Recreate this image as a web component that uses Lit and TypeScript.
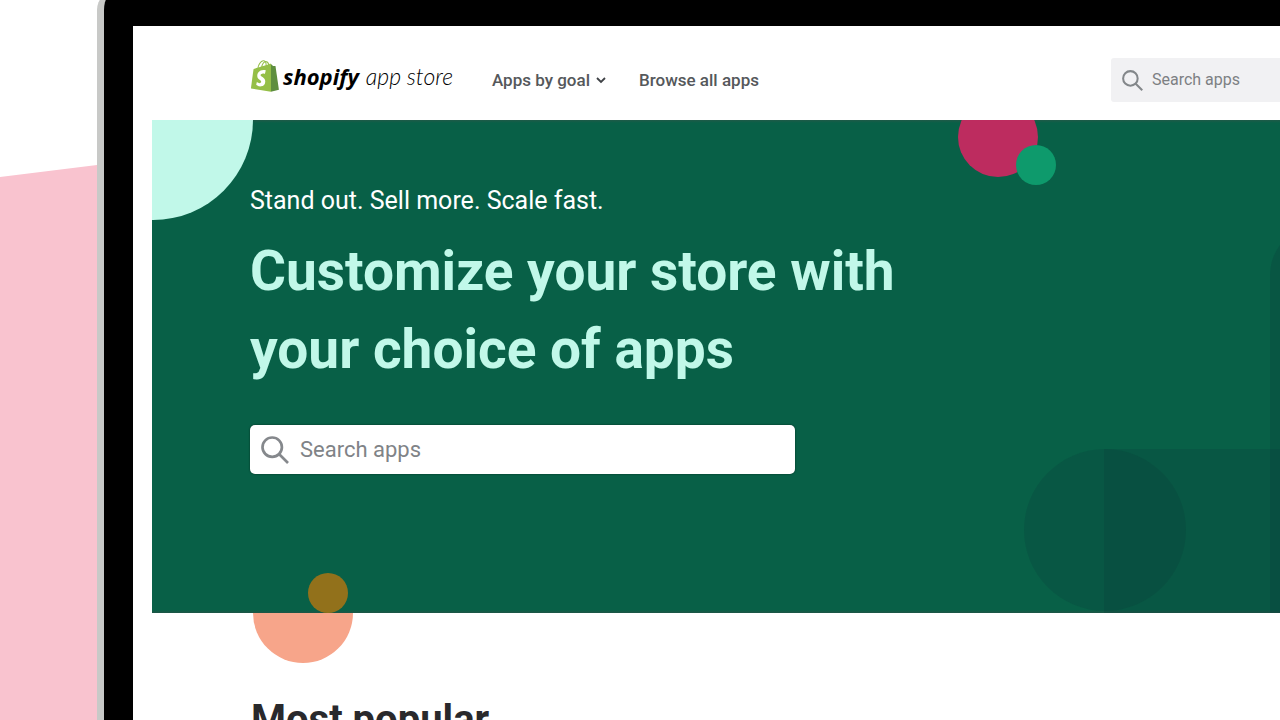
import { LitElement, html, css } from "lit";
import { customElement } from "lit/decorators.js";

const searchIcon = html`<svg class="search-icon" viewBox="0 0 28 28" aria-hidden="true">
  <circle cx="11.2" cy="11.2" r="9.7" /><path d="M18 18 27 27" />
</svg>`;

@customElement("site-header")
class SiteHeader extends LitElement {
  static styles = css`
    :host { display: block; }
    .bar { display: flex; align-items: center; height: 94px; padding: 14px 0 0 118px; box-sizing: border-box; }
    .brand { display: flex; align-items: center; gap: 4px; margin-bottom: 8px; color: #000; text-decoration: none; }
    .bag { width: 28px; height: 32px; }
    .words { display: flex; align-items: baseline; gap: 7px; white-space: nowrap; }
    .bold { font: italic 700 22px/32px "Open Sans", sans-serif; }
    .light { font: italic 300 23px/32px Lato, sans-serif; }
    nav { display: flex; align-items: center; gap: 33px; margin-left: 39px; }
    .item { display: flex; align-items: center; gap: 6px; padding: 0; border: 0; background: none; color: #55585b; font: 500 17px/24px Roboto, sans-serif; text-decoration: none; white-space: nowrap; }
    .chevron { width: 10px; height: 8px; fill: none; stroke: #3f4246; stroke-width: 1.8; }
    .search { display: flex; align-items: center; gap: 9px; box-sizing: border-box; width: 169px; height: 44px; margin-left: auto; padding-left: 11px; border-radius: 3px 0 0 3px; background: #f1f1f3; }
    .search-icon { flex: none; width: 21px; height: 21px; fill: none; stroke: #83878a; stroke-width: 2.7; }
    input { flex: 1; min-width: 0; padding: 0; border: 0; outline: 0; background: none; font: 16px/24px Roboto, sans-serif; }
    input::placeholder { color: #7d8083; opacity: 1; }
  `;
  render() {
    return html`<header class="bar">
      <a class="brand" href="#" aria-label="Shopify App Store">
        <svg class="bag" viewBox="0 0 109.5 124.5" aria-hidden="true">
          <path fill="#fff" d="M16 36h58v72H16z" />
          <path fill="#95bf47" d="M74.7,14.8c0,0-1.4,0.4-3.7,1.1c-0.4-1.3-1-2.8-1.8-4.4c-2.6-5-6.5-7.7-11.1-7.7c-0.3,0-0.6,0-1,0.1c-0.1-0.2-0.3-0.3-0.4-0.5c-2-2.2-4.6-3.2-7.7-3.1c-6,0.2-12,4.5-16.8,12.2c-3.4,5.4-6,12.2-6.8,17.5c-6.9,2.1-11.7,3.6-11.8,3.7c-3.5,1.1-3.6,1.2-4,4.5c-0.3,2.5-9.5,73-9.5,73l78.1,12.7V14.7C75.2,14.7,74.9,14.7,74.7,14.8z M57.2,20.2c-4,1.2-8.4,2.6-12.7,3.9c1.2-4.7,3.6-9.4,6.4-12.5c1.1-1.1,2.6-2.4,4.3-3.2C56.9,12,57.3,16.9,57.2,20.2z M49.1,4.3c1.4,0,2.6,0.3,3.6,0.9c-1.6,0.8-3.2,2.1-4.7,3.6c-3.8,4.1-6.7,10.5-7.9,16.6c-3.6,1.1-7.2,2.2-10.5,3.2C31.7,18.8,39.8,4.6,49.1,4.3z M37.4,59.3c0.4,6.4,17.3,7.8,18.3,22.9c0.7,11.9-6.3,20-16.4,20.6c-12.2,0.8-18.9-6.4-18.9-6.4l2.6-11c0,0,6.7,5.1,12.1,4.7c3.5-0.2,4.8-3.1,4.7-5.1c-0.5-8.4-14.3-7.9-15.2-21.7C23.8,51.8,31.4,40.1,48.2,39c6.5-0.4,9.8,1.2,9.8,1.2l-3.8,14.4c0,0-4.3-2-9.4-1.6C37.4,53.5,37.3,58.2,37.4,59.3z M61.2,19c0-2.9-0.4-7-1.8-10.6c4.3,0.8,6.4,5.7,7.3,8.6C65.1,17.5,63.2,18.1,61.2,19z" fill-rule="evenodd" />
          <path fill="#5e8e3e" d="M78.1,123.9l31.4-7.8c0,0-13.5-91.3-13.6-91.9c-0.1-0.6-0.6-1-1.1-1c-0.5,0-9.3-0.2-9.3-0.2s-5.4-5.2-7.4-7.2V123.9z" />
        </svg>
        <span class="words"><span class="bold">shopify</span><span class="light">app store</span></span>
      </a>
      <nav>
        <button class="item" type="button" aria-haspopup="true">Apps by goal
          <svg class="chevron" viewBox="0 0 10 8" aria-hidden="true"><path d="m1 2 4 4 4-4" /></svg>
        </button>
        <a class="item" href="#">Browse all apps</a>
      </nav>
      <label class="search">${searchIcon}<input type="search" placeholder="Search apps" aria-label="Search apps" /></label>
    </header>`;
  }
}

@customElement("store-hero")
class StoreHero extends LitElement {
  static styles = css`
    :host { display: block; position: relative; margin-left: 19px; }
    .hero { position: relative; overflow: hidden; padding: 63px 0 139px 98px; background: linear-gradient(#1f5a48, #086047 3px, #086047 calc(100% - 3px), #1f5546); }
    .tagline { position: relative; margin: 0; color: #fff; font: 25px/36px Roboto, sans-serif; }
    h1 { margin: 13px 0 37px; color: #c1f8e9; font: 700 55px/78px Roboto, sans-serif; }
    .search { display: flex; align-items: center; gap: 11px; box-sizing: border-box; width: 545px; max-width: 90%; height: 49px; padding: 0 11px; border-radius: 5px; background: #fff; box-shadow: 0 0 2px #0009; }
    .search-icon { flex: none; width: 28px; height: 28px; fill: none; stroke: #85888c; stroke-width: 2.7; }
    input { flex: 1; min-width: 0; padding: 0; border: 0; outline: 0; background: none; font: 22px/32px Roboto, sans-serif; }
    input::placeholder { color: #808387; opacity: 1; }
    .shape { position: absolute; border-radius: 50%; }
    .mint { left: -99px; top: -100px; width: 200px; height: 200px; background: #c1f8e9; }
    .berry { right: 242px; top: -23px; width: 80px; height: 80px; background: #bd2c5f; }
    .leaf { right: 224px; top: 25px; width: 40px; height: 40px; background: #0e9a6c; }
    .amber { left: 156px; bottom: 0; width: 40px; height: 40px; background: #92711b; }
    .moon { right: 94px; bottom: 2px; width: 162px; height: 162px; background: rgba(12, 50, 56, 0.18); }
    .panel { right: 0; bottom: 0; width: 176px; height: 164px; border-radius: 0; background: rgba(12, 50, 56, 0.18); }
    .tower { right: -90px; top: 105px; bottom: 0; width: 100px; border-radius: 50px 50px 0 0; background: rgba(12, 50, 56, 0.2); }
    .peach { left: 101px; top: 100%; width: 100px; height: 50px; border-radius: 0 0 50px 50px; background: #f7a58a; }
  `;
  render() {
    return html`<section class="hero">
        <div class="shape mint"></div>
        <div class="shape berry"></div>
        <div class="shape leaf"></div>
        <div class="shape amber"></div>
        <div class="shape moon"></div>
        <div class="shape panel"></div>
        <div class="shape tower"></div>
        <p class="tagline">Stand out. Sell more. Scale fast.</p>
        <h1>Customize your store with<br />your choice of apps</h1>
        <label class="search">${searchIcon}<input type="search" placeholder="Search apps" aria-label="Search all apps" /></label>
      </section>
      <div class="shape peach"></div>`;
  }
}

@customElement("app-root")
class AppRoot extends LitElement {
  static styles = css`
    :host { display: block; }
    .scene { position: relative; display: flex; height: 100vh; overflow: hidden; padding-left: 97px; box-sizing: border-box; background: #fff; }
    .backdrop { position: absolute; left: 0; top: 165px; bottom: 0; width: 97px; background: #f9c3cf; clip-path: polygon(0 12px, 100% 0, 100% 100%, 0 100%); }
    .laptop { position: relative; flex: 1; min-width: 0; margin-top: -10px; padding: 36px 0 0 29px; border-left: 7px solid #c8c9c7; border-radius: 20px 0 0 0; background: #000; }
    .screen { min-height: 100%; background: #fff; }
    h2 { margin: 79px 0 0 118px; color: #29292c; font: 700 40px/56px Roboto, sans-serif; }
  `;
  render() {
    return html`<div class="scene">
      <div class="backdrop"></div>
      <div class="laptop">
        <main class="screen">
          <site-header></site-header>
          <store-hero></store-hero>
          <h2>Most popular</h2>
        </main>
      </div>
    </div>`;
  }
}
